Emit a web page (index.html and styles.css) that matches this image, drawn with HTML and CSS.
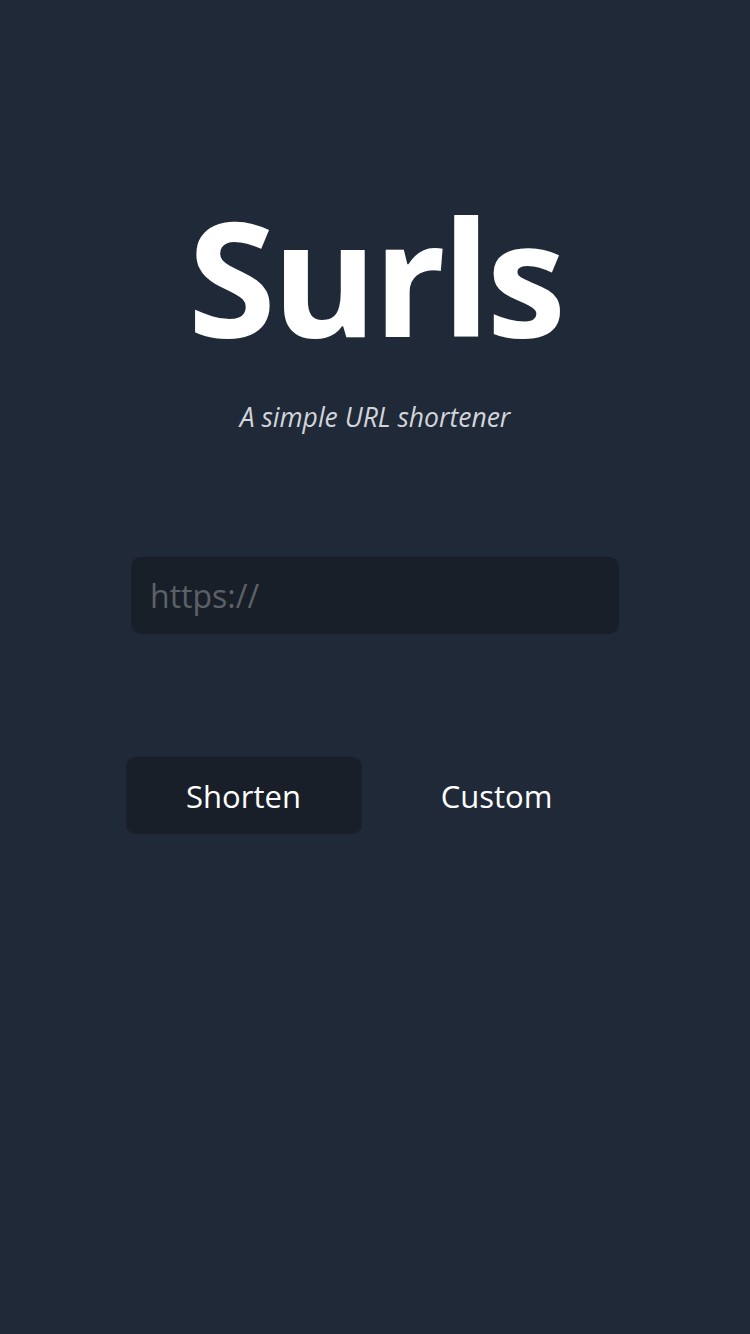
FILE: index.html
```html
<!DOCTYPE html>
<html lang="en">
<head>
<meta charset="utf-8">
<title>Surls</title>
<link rel="stylesheet" href="styles.css">
</head>
<body>
<main class="page">
  <header class="hero">
    <h1 class="title">Surls</h1>
    <p class="tagline">A simple URL shortener</p>
  </header>
  <form class="form">
    <input class="url-input" type="text" placeholder="https://">
    <div class="actions">
      <button class="btn btn-primary" type="button">Shorten</button>
      <button class="btn btn-ghost" type="button">Custom</button>
    </div>
  </form>
</main>
</body>
</html>
```
FILE: styles.css
```css
html, body {
  margin: 0;
  padding: 0;
  background: #1f2937;
  height: 100%;
}
body {
  font-family: "Open Sans", "Noto Sans", sans-serif;
  color: #ffffff;
}
.page {
  display: flex;
  flex-direction: column;
  align-items: center;
  padding-top: 190px;
}
.hero {
  display: flex;
  flex-direction: column;
  align-items: center;
}
.title {
  margin: 0;
  font-size: 160px;
  line-height: 170px;
  font-weight: 700;
  letter-spacing: -4px;
  color: #ffffff;
}
.tagline {
  margin: 40px 0 0;
  font-size: 26.5px;
  line-height: 34px;
  font-style: italic;
  color: #d1d5db;
}
.form {
  margin-top: 123px;
  display: flex;
  flex-direction: column;
  align-items: center;
}
.url-input {
  box-sizing: border-box;
  width: 488px;
  height: 77px;
  padding: 0 19px;
  border: none;
  border-radius: 10px;
  background: #181f28;
  font-family: inherit;
  font-size: 32px;
  color: #e5e7eb;
  outline: none;
}
.url-input::placeholder {
  color: #5c6168;
}
.actions {
  margin-top: 123px;
  margin-right: 10px;
  display: flex;
  gap: 17px;
}
.btn {
  box-sizing: border-box;
  width: 236px;
  height: 77px;
  border: none;
  border-radius: 10px;
  font-family: inherit;
  font-size: 31px;
  color: #ffffff;
  cursor: pointer;
}
.btn-primary {
  background: #181f28;
}
.btn-ghost {
  background: transparent;
}
```
